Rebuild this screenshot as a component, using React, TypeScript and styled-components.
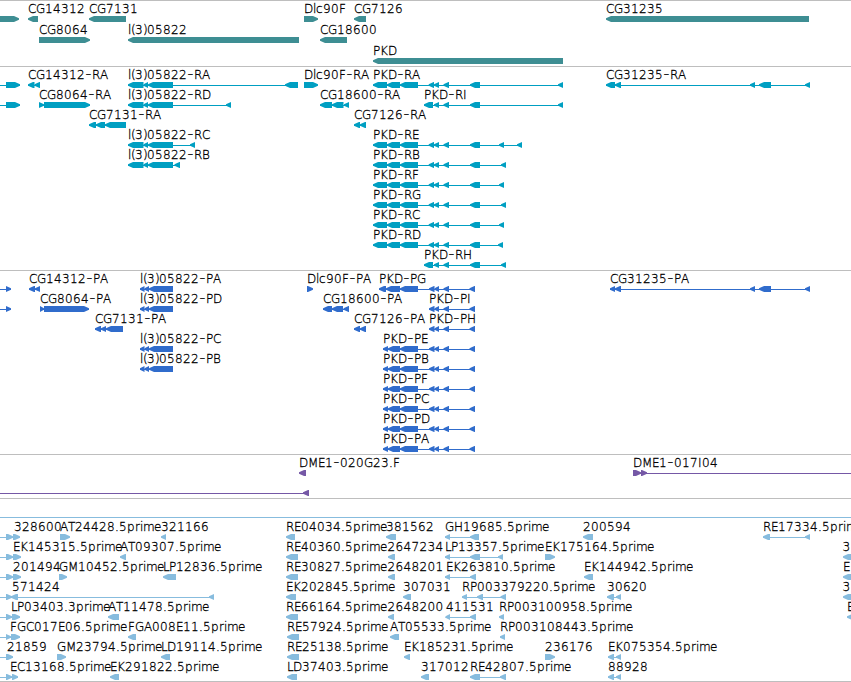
import React from 'react'
import styled, { createGlobalStyle } from 'styled-components'

type Exon = [number, number]

interface Feature {
  name: string
  x: number
  dir: 'l' | 'r'
  exons: Exon[]
}

interface TrackData {
  id: string
  color: string
  rowHeight: number
  padBottom: number
  rows: Feature[][]
}

const WIDTH = 851

const GlobalStyle = createGlobalStyle`
  body {
    margin: 0;
    background: #fff;
  }
`

const Browser = styled.main`
  width: ${WIDTH}px;
  height: 682px;
  overflow: hidden;
  display: flex;
  flex-direction: column;
  box-sizing: border-box;
  border-bottom: 1px solid #bebebe;
  background: #fff;
`

const Track = styled.section<{ $padBottom: number }>`
  display: flex;
  flex-direction: column;
  flex: none;
  border-top: 1px solid #bebebe;
  padding-bottom: ${(p) => p.$padBottom}px;
`

const Row = styled.svg<{ $height: number; $color: string }>`
  display: block;
  flex: none;
  width: ${WIDTH}px;
  height: ${(p) => p.$height}px;
  overflow: visible;
  fill: ${(p) => p.$color};
`

const Label = styled.text`
  font-family: 'DejaVu Sans', sans-serif;
  font-size: 12px;
  font-weight: 200;
  fill: #000;
  stroke: #000;
  stroke-width: 0.3px;
  white-space: pre;
`

const Dash = styled.tspan`
  font-size: 16px;
`

// whole pixel advances of the label font
const ADVANCE: Record<string, number> = {
  '-': 7, '.': 4, '(': 4, ')': 4,
  A: 8, B: 8, C: 8, D: 9, E: 7, F: 7, G: 9, H: 9, I: 4, K: 8, L: 6, M: 10, P: 7, R: 8, T: 7,
  c: 7, e: 7, i: 3, l: 3, m: 11, p: 8, r: 5,
}

const charPositions = (name: string, x: number): number[] => {
  let pos = x - 1
  return name.split('').map((ch) => {
    const at = pos
    pos += ADVANCE[ch] || 8
    return at
  })
}

const left = (name: string, x: number, ...exons: Exon[]): Feature => ({ name, x, dir: 'l', exons })
const right = (name: string, x: number, ...exons: Exon[]): Feature => ({ name, x, dir: 'r', exons })

const pkdTail: Exon[] = [[428.7, 434], [434, 439], [443.5, 449], [470, 480]]
const pkdBody: Exon[] = [[373, 387], [387, 400], [400, 418], ...pkdTail]
const pkdProteinTail: Exon[] = [[429, 434.5], [434.5, 439], [443.5, 449], [469.5, 475]]
const pkdProtein: Exon[] = [[383, 388], [388, 400], [400, 418], ...pkdProteinTail]
const lethal: Exon[] = [[128, 143.5], [143.5, 148], [148, 173]]
const lethalProtein: Exon[] = [[140, 144.5], [144.5, 149], [149, 173]]

const tracks: TrackData[] = [
  {
    id: 'genes',
    color: '#3e8e93',
    rowHeight: 21,
    padBottom: 2,
    rows: [
      [
        right('', 0, [-20, 19]),
        left('CG14312', 29, [28, 38]),
        left('CG7131', 90, [89, 126]),
        right('Dlc90F', 305, [304, 318]),
        left('CG7126', 355, [354, 366]),
        left('CG31235', 607, [606, 809]),
      ],
      [
        right('CG8064', 40, [39, 90]),
        left('l(3)05822', 129, [128, 299]),
        left('CG18600', 321, [320, 347]),
      ],
      [left('PKD', 374, [373, 563])],
    ],
  },
  {
    id: 'transcripts',
    color: '#009fc2',
    rowHeight: 20,
    padBottom: 3,
    rows: [
      [
        right('', 0, [-20, -10], [6, 20]),
        left('CG14312-RA', 29, [28, 34.5], [34.5, 40]),
        left('l(3)05822-RA', 129, ...lethal, [285, 298]),
        right('Dlc90F-RA', 305, [304, 318]),
        left('PKD-RA', 374, ...pkdBody, [558, 563]),
        left('CG31235-RA', 607, [606, 615], [615, 621], [750, 755], [759, 771], [805, 810]),
      ],
      [
        right('', 0, [-20, -10], [6, 20]),
        right('CG8064-RA', 40, [39, 44], [44, 90]),
        left('l(3)05822-RD', 129, ...lethal, [226, 231]),
        left('CG18600-RA', 321, [320, 332], [332, 343.5], [344, 349]),
        left('PKD-RI', 425, [424, 433], [434, 439], [443.5, 449], [470, 480], [558, 563]),
      ],
      [
        left('CG7131-RA', 90, [89, 96], [96, 105], [105, 126]),
        left('CG7126-RA', 355, [354, 360], [360, 366]),
      ],
      [
        left('l(3)05822-RC', 129, ...lethal, [190, 195]),
        left('PKD-RE', 374, ...pkdBody, [499, 504], [517, 522]),
      ],
      [
        left('l(3)05822-RB', 129, ...lethal, [174.5, 180]),
        left('PKD-RB', 374, ...pkdBody, [501, 506]),
      ],
      [left('PKD-RF', 374, ...pkdBody, [499, 504])],
      [left('PKD-RG', 374, ...pkdBody, [501, 506])],
      [left('PKD-RC', 374, ...pkdBody, [499, 504])],
      [left('PKD-RD', 374, ...pkdBody, [498, 503])],
      [left('PKD-RH', 425, [424, 433], [434, 439], [443.5, 449], [470, 480], [501, 506])],
    ],
  },
  {
    id: 'proteins',
    color: '#306ccc',
    rowHeight: 20,
    padBottom: 3,
    rows: [
      [
        right('', 0, [-20, -10], [6, 11]),
        left('CG14312-PA', 30, [29, 35], [35, 40]),
        left('l(3)05822-PA', 141, ...lethalProtein),
        right('Dlc90F-PA', 308, [307, 313]),
        left('PKD-PG', 380, [379, 386], [386, 400], [400, 418], ...pkdProteinTail),
        left('CG31235-PA', 611, [610, 615], [615, 621], [750, 755], [759, 771], [805, 810]),
      ],
      [
        right('', 0, [-20, -10], [6, 11]),
        right('CG8064-PA', 41, [40, 44], [44, 89]),
        left('l(3)05822-PD', 141, ...lethalProtein),
        left('CG18600-PA', 324, [323, 332], [332, 343], [343.5, 349]),
        left('PKD-PI', 430, ...pkdProteinTail),
      ],
      [
        left('CG7131-PA', 96, [95, 101], [101, 106], [106, 123]),
        left('CG7126-PA', 355, [354, 360], [360, 366]),
        left('PKD-PH', 430, ...pkdProteinTail),
      ],
      [left('l(3)05822-PC', 141, ...lethalProtein), left('PKD-PE', 384, ...pkdProtein)],
      [left('l(3)05822-PB', 141, ...lethalProtein), left('PKD-PB', 384, ...pkdProtein)],
      [left('PKD-PF', 384, ...pkdProtein)],
      [left('PKD-PC', 384, ...pkdProtein)],
      [left('PKD-PD', 384, ...pkdProtein)],
      [left('PKD-PA', 384, ...pkdProtein)],
    ],
  },
  {
    id: 'clones',
    color: '#7558a6',
    rowHeight: 20,
    padBottom: 3,
    rows: [
      [
        left('DME1-020G23.F', 300, [299, 306]),
        right('DME1-017I04', 634, [633, 641], [641, 647], [860, 870]),
      ],
      [left('', 0, [-20, -10], [303, 309])],
    ],
  },
  {
    id: 'ests',
    color: '#87bcde',
    rowHeight: 20,
    padBottom: 2,
    rows: [
      [left('', 0, [-20, -10], [860, 870])],
      [
        right('328600', 15, [-20, -10], [6, 13], [13, 20]),
        right('AT24428.5prime', 61, [60, 70]),
        left('321166', 162, [161, 166]),
        left('RE04034.5prime', 287, [286, 295]),
        left('381562', 387, [386, 396]),
        left('GH19685.5prime', 446, [445, 450], [470, 479]),
        left('200594', 584, [583, 593]),
        left('RE17334.5prime', 764, [763, 770], [805, 810]),
      ],
      [
        right('EK145315.5prime', 14, [-20, -10], [6, 13], [13, 21]),
        left('AT09307.5prime', 121, [120, 126]),
        left('RE40360.5prime', 287, [286, 298]),
        left('2647234', 388.5, [388, 395]),
        left('LP13357.5prime', 446, [445, 450], [470, 480], [498, 503]),
        right('EK175164.5prime', 546, [545, 555]),
        left('3', 843.5, [843, 860]),
      ],
      [
        right('201494', 14, [-20, -10], [6, 13], [13, 21]),
        right('GM10452.5prime', 60, [59, 67]),
        left('LP12836.5prime', 164, [163, 176]),
        left('RE30827.5prime', 287, [286, 298]),
        left('2648201', 388.5, [388, 395]),
        left('EK263810.5prime', 447, [445, 450], [470, 476]),
        left('EK144942.5prime', 585, [584, 593]),
        left('E', 844, [843, 860]),
      ],
      [
        right('', 0, [-20, -10], [6, 12]),
        left('571424', 13, [11, 18], [209, 214]),
        left('EK202845.5prime', 287, [286, 296]),
        left('307031', 404, [403, 411]),
        left('RP003379220.5prime', 463, [462, 467], [477, 483], [500.5, 506]),
        left('30620', 608, [607, 614], [616, 621]),
        left('3', 843.5, [843, 860]),
      ],
      [
        right('LP03403.3prime', 12, [-20, -10], [6, 12], [12, 20]),
        left('AT11478.5prime', 109, [108, 119]),
        left('RE66164.5prime', 287, [286, 298]),
        left('2648200', 388.5, [388, 394]),
        left('411531', 447, [445.5, 450], [470, 476]),
        left('RP003100958.5prime', 500, [499, 504]),
        left('E', 848, [847, 860]),
      ],
      [
        right('FGC017E06.5prime', 11, [-20, -10], [6, 11], [11, 20]),
        left('FGA008E11.5prime', 129, [128, 136]),
        left('RE57924.5prime', 288, [287, 299]),
        left('AT05533.5prime', 391, [390, 399]),
        left('RP003108443.5prime', 501, [500, 505]),
      ],
      [
        right('21859', 8, [-20, -10], [6, 13]),
        right('GM23794.5prime', 58, [57, 66]),
        left('LD19114.5prime', 162, [161, 170]),
        left('RE25138.5prime', 288, [287, 299]),
        left('EK185231.5prime', 405, [404, 410]),
        right('236176', 546, [545, 555]),
        left('EK075354.5prime', 609, [608, 614], [616, 621]),
      ],
      [
        right('EC13168.5prime', 11, [-20, -10], [6, 12], [12, 18]),
        left('EK291822.5prime', 111, [110, 119]),
        left('LD37403.5prime', 288, [287, 297]),
        left('317012', 422, [421, 429]),
        left('RE42807.5prime', 471, [470, 480], [500, 506]),
        left('88928', 609, [608, 614], [616, 621]),
      ],
    ],
  },
]

// exon box, 6px high, with its head on the side of the strand
const exonPath = ([start, end]: Exon, dir: 'l' | 'r', top: number): string => {
  const head = Math.min(5, end - start)
  const bottom = top + 6
  const tip = dir === 'l' ? start : end
  const tail = dir === 'l' ? end : start
  const neck = dir === 'l' ? start + head : end - head
  return `M${tip} ${top + 2.3}L${neck} ${top}H${tail}V${bottom}H${neck}L${tip} ${top + 3.7}Z`
}

const FeatureGlyph = ({ feature }: { feature: Feature }) => {
  const { name, x, dir, exons } = feature
  const from = exons[0][0]
  const to = exons[exons.length - 1][1]
  const [base, suffix] = name.split('-')
  const positions = charPositions(name, x)

  return (
    <g>
      {exons.length > 1 && <rect x={from} y={18} width={to - from} height={1} />}
      {exons.map((exon) => (
        <path key={exon[0]} d={exonPath(exon, dir, 15)} />
      ))}
      {name && (
        <Label y={12}>
          <tspan x={positions.slice(0, base.length).join(' ')}>{base}</tspan>
          {suffix && <Dash x={positions[base.length] + 0.5}>-</Dash>}
          {suffix && <tspan x={positions.slice(base.length + 1).join(' ')}>{suffix}</tspan>}
        </Label>
      )}
    </g>
  )
}

const App = () => (
  <>
    <GlobalStyle />
    <Browser>
      {tracks.map((track) => (
        <Track key={track.id} $padBottom={track.padBottom}>
          {track.rows.map((row, i) => (
            <Row key={i} $height={track.rowHeight} $color={track.color}>
              {row.map((feature, j) => (
                <FeatureGlyph key={j} feature={feature} />
              ))}
            </Row>
          ))}
        </Track>
      ))}
    </Browser>
  </>
)

export default App
